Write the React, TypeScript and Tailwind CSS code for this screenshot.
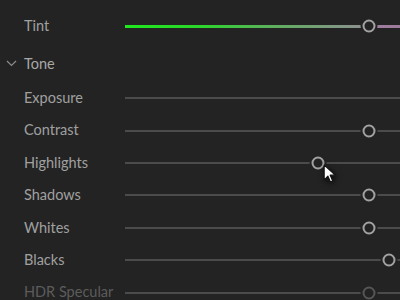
import React from "react";

interface Slider {
  label: string;
  pos?: number; // thumb centre, px from track start
  dim?: boolean;
  tint?: boolean;
  raise?: boolean;
}

// row above the fold, only its descenders peek in at the top edge
const before: Slider[] = [
  { label: "Temperature", raise: true },
  { label: "Tint", pos: 244, tint: true },
];

const tone: Slider[] = [
  { label: "Exposure", pos: 300 },
  { label: "Contrast", pos: 244 },
  { label: "Highlights", pos: 193 },
  { label: "Shadows", pos: 244 },
  { label: "Whites", pos: 244 },
  { label: "Blacks", pos: 264 },
  { label: "HDR Specular", pos: 244, dim: true },
];

function Row({ s, h }: { s: Slider; h: string }) {
  return (
    <div className={`flex items-center ${h}`}>
      <span
        className={[
          "w-[125px] pl-[24px] shrink-0 text-[14.5px] leading-none whitespace-nowrap",
          s.dim ? "text-[#5c5c5c]" : "text-[#a0a0a0]",
          s.raise ? "-translate-y-[3px]" : "",
        ].join(" ")}
      >
        {s.label}
      </span>
      <div className="relative w-[300px] shrink-0 flex items-center">
        <div
          className={
            s.tint
              ? "w-full h-[3px] bg-[linear-gradient(to_right,#1ee81e_0%,#2cd62c_25%,#5fae5f_50%,#86958a_75%,#8f8f8f_80%,#9c7c9c_83%,#a07aa0_100%)]"
              : "w-full h-[2px] bg-[#4b4b4b]"
          }
        />
        {s.pos !== undefined && (
          <div
            className={[
              "absolute top-1/2 -translate-x-1/2 -translate-y-1/2 w-[13px] h-[13px] rounded-full border-2 bg-[#232323] shadow-[0_0_0_2px_#232323]",
              s.dim ? "border-[#555555]" : "border-[#a2a2a2]",
            ].join(" ")}
            style={{ left: s.pos }}
          />
        )}
      </div>
    </div>
  );
}

export default function App() {
  return (
    <div
      className="relative w-[400px] h-[300px] overflow-hidden bg-[#232323]"
      style={{ fontFamily: "Lato, 'Open Sans', sans-serif" }}
    >
      <div className="-mt-[22px] flex flex-col">
        {before.map((s) => (
          <Row key={s.label} s={s} h="h-[32px]" />
        ))}

        {/* Section header */}
        <div className="h-[40px] pt-[4px] flex items-center">
          <svg width="24" height="12" viewBox="0 0 24 12" className="shrink-0 -mt-[3px]">
            <polyline points="7,4 11.5,8.5 16,4" fill="none" stroke="#8c8c8c" strokeWidth="1.2" />
          </svg>
          <span className="text-[14.5px] leading-none text-[#a8a8a8]">Tone</span>
        </div>

        {tone.map((s) => (
          <Row key={s.label} s={s} h="h-[32.4px]" />
        ))}
      </div>

      {/* mouse pointer */}
      <svg
        width="15"
        height="21"
        viewBox="0 0 14 20"
        className="absolute left-[323px] top-[164px] drop-shadow-[1px_2px_3px_rgba(0,0,0,0.8)]"
      >
        <path d="M1 1 L1 15 L4.5 11.5 L7 17 L9 16 L6.6 10.6 L11.5 10.6 Z" fill="#ffffff" stroke="#111111" strokeWidth="1" strokeLinejoin="round" />
      </svg>
    </div>
  );
}
